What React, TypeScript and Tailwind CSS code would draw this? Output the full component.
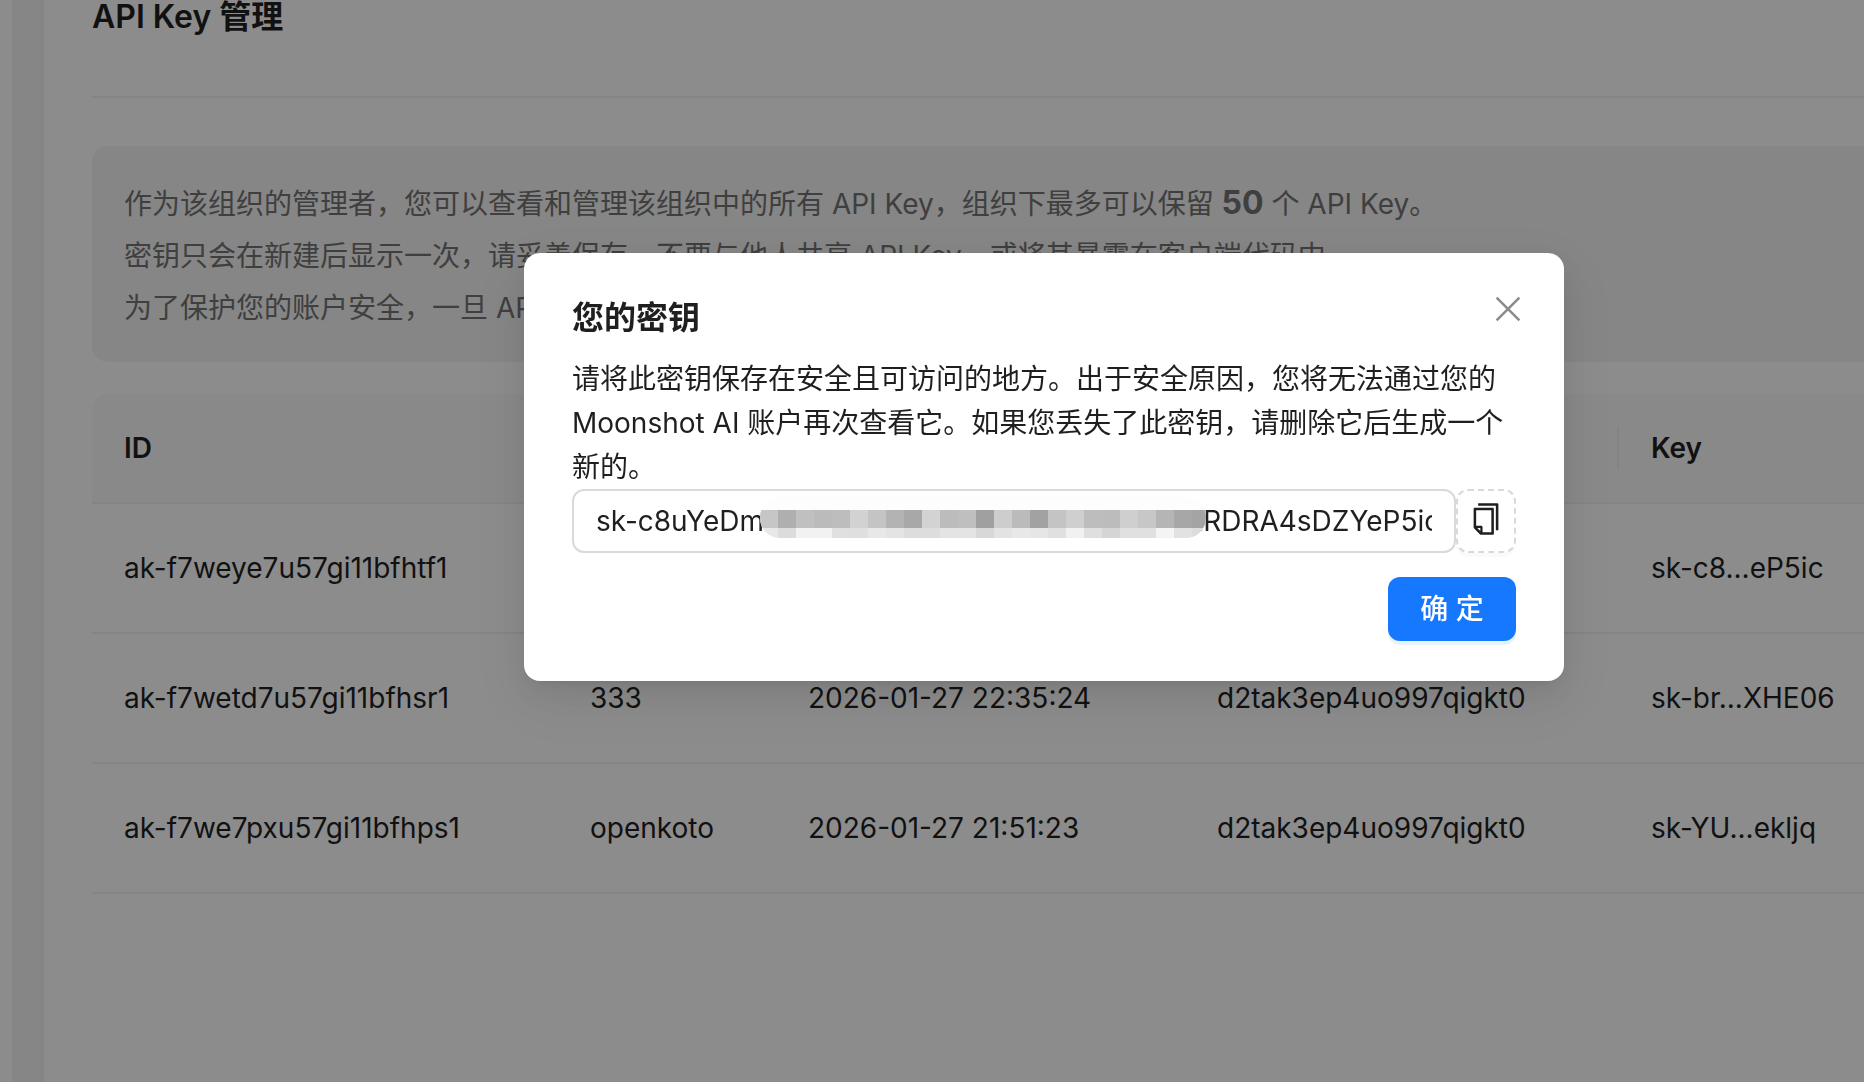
import { useState } from "react"
import { AiOutlineCopy } from "react-icons/ai"

interface ApiKey {
  id: string
  name: string
  createdAt: string
  creator: string
  masked: string
}

const KEYS: ApiKey[] = [
  { id: "ak-f7weye7u57gi11bfhtf1", name: "", createdAt: "", creator: "d2tak3ep4uo997qigkt0", masked: "sk-c8...eP5ic" },
  { id: "ak-f7wetd7u57gi11bfhsr1", name: "333", createdAt: "2026-01-27 22:35:24", creator: "d2tak3ep4uo997qigkt0", masked: "sk-br...XHE06" },
  { id: "ak-f7we7pxu57gi11bfhps1", name: "openkoto", createdAt: "2026-01-27 21:51:23", creator: "d2tak3ep4uo997qigkt0", masked: "sk-YU...ekljq" },
]

const COLUMNS = [
  { title: "ID",       width: "w-[466px]" },
  { title: "名称",     width: "w-[218px]" },
  { title: "创建时间", width: "w-[409px]" },
  { title: "创建者",   width: "w-[434px]" },
  { title: "Key",      width: "" },
]

// Grey levels of the censor bar, left to right
const MOSAIC_TOP = [
  0xc6, 0xaf, 0xc0, 0xbb, 0xbd, 0xd2, 0xc4, 0xb3, 0xa8, 0xd3, 0xbc, 0xbf, 0xa0,
  0xcd, 0xbb, 0xa2, 0xc4, 0xcf, 0xbd, 0xbc, 0xcf, 0xc7, 0xb5, 0xa7, 0xa4,
]
const MOSAIC_BOTTOM = [
  0xe8, 0xdc, 0xf2, 0xf2, 0xe0, 0xdf, 0xe8, 0xe4, 0xdd, 0xdd, 0xe4, 0xe4, 0xd8,
  0xe3, 0xe8, 0xe6, 0xe0, 0xf1, 0xdf, 0xd5, 0xe0, 0xe0, 0xf4, 0xe2, 0xdc,
]

const SECRET = "sk-c8uYeDm" + "0".repeat(24) + "x" + "RDRA4sDZYeP5ic"

const grey = (v: number) => `rgb(${v},${v},${v})`

function Mosaic() {
  return (
    <svg
      width="446"
      height="41"
      viewBox="0 0 446 41"
      aria-hidden="true"
      className="absolute left-[188px] top-2 pointer-events-none"
    >
      <clipPath id="pill">
        <rect width="446" height="41" rx="20" />
      </clipPath>
      <g clipPath="url(#pill)" shapeRendering="crispEdges">
        <rect width="446" height="41" fill="#fdfdfd" />
        {MOSAIC_TOP.map((v, i) => (
          <rect key={i} x={i * 18} y="13" width="18" height="18" fill={grey(v)} />
        ))}
        {MOSAIC_BOTTOM.map((v, i) => (
          <rect key={i} x={i * 18} y="31" width="18" height="10" fill={grey(v)} />
        ))}
      </g>
    </svg>
  )
}

function KeyTable() {
  return (
    <table className="mt-8 w-full table-fixed border-separate border-spacing-0 text-left">
      <thead>
        <tr>
          {COLUMNS.map((col, i) => (
            <th
              key={col.title}
              className={`h-[110px] border-b-2 border-[#f0f0f0] bg-[#fafafa] p-0 font-semibold first:rounded-tl-2xl ${col.width}`}
            >
              <div className={`px-8 leading-[44px] ${i < COLUMNS.length - 1 ? "border-r-2 border-[#f0f0f0]" : ""}`}>
                {col.title}
              </div>
            </th>
          ))}
        </tr>
      </thead>
      <tbody>
        {KEYS.map(k => (
          <tr key={k.id} className="whitespace-nowrap">
            {[k.id, k.name, k.createdAt, k.creator, k.masked].map((value, i) => (
              <td key={i} className="h-[130px] border-b-2 border-[#f0f0f0] px-8 py-0">{value}</td>
            ))}
          </tr>
        ))}
      </tbody>
    </table>
  )
}

function SecretDialog({ onClose }: { onClose: () => void }) {
  return (
    <div className="fixed inset-0 flex items-start bg-black/45 pl-[524px] pt-[253px]">
      <div
        role="dialog"
        aria-labelledby="secret-title"
        className="relative w-full max-w-[1040px] rounded-2xl bg-white px-12 py-10 text-[#1f1f1f] shadow-[0_12px_32px_0_rgba(0,0,0,0.08),0_6px_12px_-8px_rgba(0,0,0,0.12),0_18px_56px_16px_rgba(0,0,0,0.05)]"
      >
        {/* Close */}
        <button
          onClick={onClose}
          aria-label="关闭"
          className="absolute right-8 top-8 flex size-12 items-center justify-center text-[#8c8c8c]"
        >
          <svg width="26" height="26" viewBox="0 0 26 26" fill="none" stroke="currentColor" strokeWidth="2.6">
            <path d="M1.6 1.6 24.4 24.4M24.4 1.6 1.6 24.4" />
          </svg>
        </button>

        <h2 id="secret-title" className="mb-[14px] text-[32px] font-bold leading-[50px]">您的密钥</h2>

        <label htmlFor="secret" className="block leading-[44px]">
          请将此密钥保存在安全且可访问的地方。出于安全原因，您将无法通过您的 Moonshot AI 账户再次查看它。如果您丢失了此密钥，请删除它后生成一个新的。
        </label>

        {/* Key + copy */}
        <div className="flex">
          <div className="relative flex-1">
            <input
              id="secret"
              readOnly
              value={SECRET}
              className="block h-16 w-full rounded-xl border-2 border-[#d9d9d9] bg-white px-[22px] outline-none"
            />
            <Mosaic />
          </div>
          <button
            onClick={() => navigator.clipboard?.writeText(SECRET)}
            aria-label="复制"
            className="flex h-16 w-[60px] items-center justify-center rounded-xl border-2 border-dashed border-[#d9d9d9] bg-white pb-1 shadow-[0_4px_0_rgba(0,0,0,0.02)]"
          >
            <AiOutlineCopy size={36} />
          </button>
        </div>

        <div className="mt-6 flex justify-end">
          <button
            onClick={onClose}
            className="h-16 w-32 rounded-xl bg-[#1677ff] font-medium text-white shadow-[0_4px_0_rgba(5,145,255,0.1)]"
          >
            确 定
          </button>
        </div>
      </div>
    </div>
  )
}

export default function App() {
  const [open, setOpen] = useState(true)

  return (
    <div className="flex min-h-screen overflow-hidden bg-[#f4f4f4] font-[Inter,'Noto_Sans_CJK_SC',sans-serif] text-[28px] text-[#1f1f1f]">
      <aside className="w-3 shrink-0 bg-white" />

      <main className="ml-8 min-w-0 flex-1 bg-white pl-12 shadow-[0_0_8px_rgba(0,0,0,0.04)]">
        <h1 className="border-b-2 border-[#f0f0f0] pb-[62px] text-[32px] font-semibold leading-[34px]">API Key 管理</h1>

        {/* Notice */}
        <div className="mt-12 rounded-l-2xl bg-[#f4f4f4] px-8 pb-7 pt-8 leading-[52px] text-[#737373]">
          <p>
            作为该组织的管理者，您可以查看和管理该组织中的所有 API Key，组织下最多可以保留{" "}
            <strong className="text-[32px] font-bold leading-none">50</strong> 个 API Key。
          </p>
          <p>密钥只会在新建后显示一次，请妥善保存，不要与他人共享 API Key，或将其暴露在客户端代码中。</p>
          <p>为了保护您的账户安全，一旦 API Key</p>
        </div>

        <KeyTable />
      </main>

      {open && <SecretDialog onClose={() => setOpen(false)} />}
    </div>
  )
}
